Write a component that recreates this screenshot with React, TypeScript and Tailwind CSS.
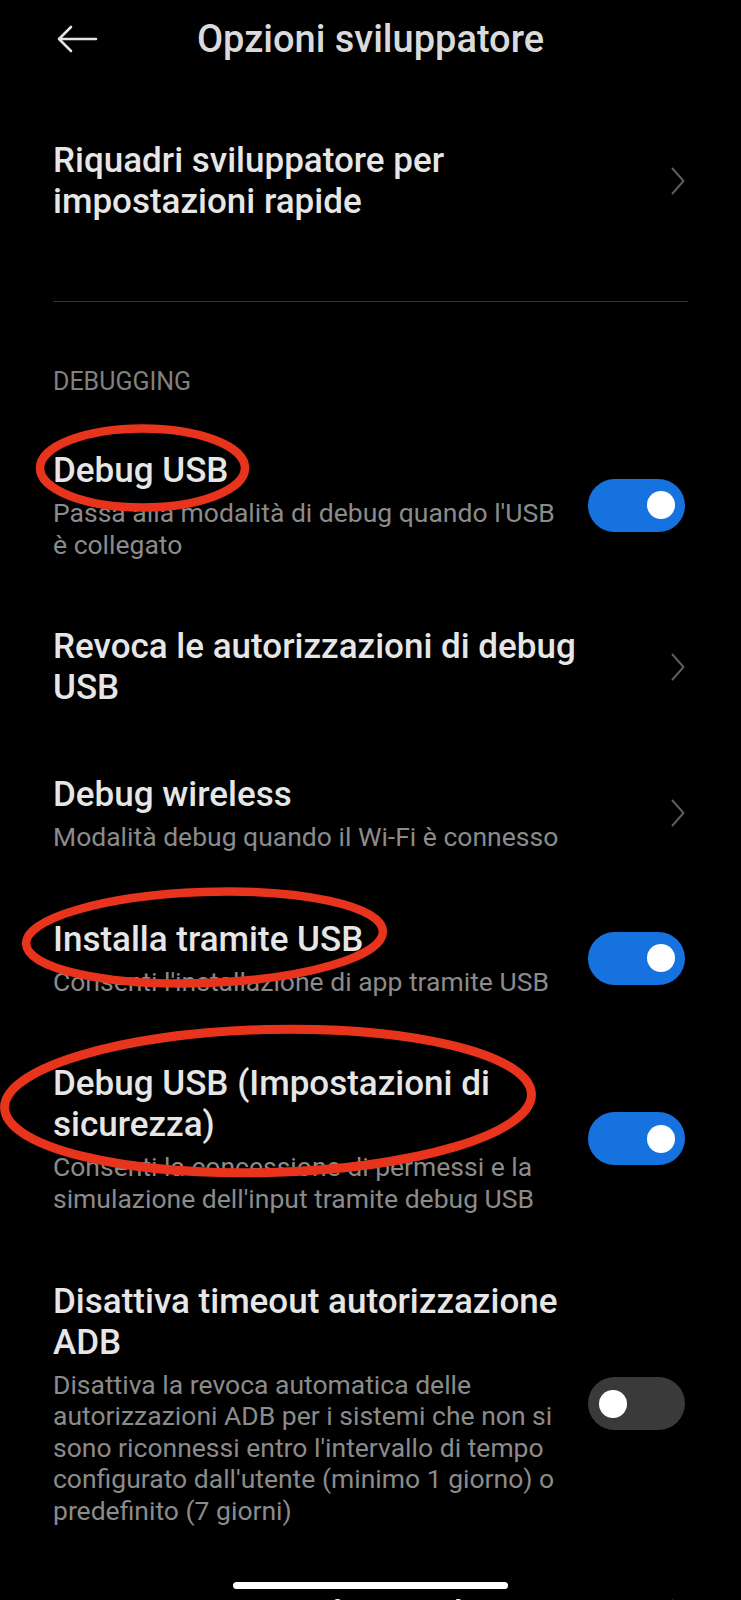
import React from "react";

type Row = {
  title: string;
  subtitle?: string;
  kind: "toggle" | "chevron";
  on?: boolean;
};

const rows: Row[] = [
  {
    title: "Debug USB",
    subtitle: "Passa alla modalità di debug quando l'USB è collegato",
    kind: "toggle",
    on: true,
  },
  { title: "Revoca le autorizzazioni di debug USB", kind: "chevron" },
  {
    title: "Debug wireless",
    subtitle: "Modalità debug quando il Wi-Fi è connesso",
    kind: "chevron",
  },
  {
    title: "Installa tramite USB",
    subtitle: "Consenti l'installazione di app tramite USB",
    kind: "toggle",
    on: true,
  },
  {
    title: "Debug USB (Impostazioni di sicurezza)",
    subtitle: "Consenti la concessione di permessi e la simulazione dell'input tramite debug USB",
    kind: "toggle",
    on: true,
  },
  {
    title: "Disattiva timeout autorizzazione ADB",
    subtitle:
      "Disattiva la revoca automatica delle autorizzazioni ADB per i sistemi che non si sono riconnessi entro l'intervallo di tempo configurato dall'utente (minimo 1 giorno) o predefinito (7 giorni)",
    kind: "toggle",
    on: false,
  },
  { title: "Scorciatoia segnalazione bug", kind: "chevron" },
];

function Chevron() {
  return (
    <svg width="14" height="28" viewBox="0 0 14 28" fill="none">
      <polyline points="1.5,1.5 12.5,14 1.5,26.5" stroke="#5c5c5c" strokeWidth="2" strokeLinecap="round" strokeLinejoin="round" />
    </svg>
  );
}

function Toggle({ on }: { on?: boolean }) {
  return (
    <div
      className={
        on
          ? "w-[97px] h-[53px] rounded-full bg-[#1672de] flex items-center justify-end pr-[10px] shrink-0"
          : "w-[97px] h-[53px] rounded-full bg-[#3a3a3a] flex items-center justify-start pl-[11px] shrink-0"
      }
    >
      <div className="w-[28px] h-[28px] rounded-full bg-white" />
    </div>
  );
}

function SettingRow({ row }: { row: Row }) {
  const isToggle = row.kind === "toggle";
  return (
    <div className="flex items-center pl-[53px] pr-[56px] py-[33px]">
      <div className={isToggle ? "flex-1 min-w-0 pr-[20px]" : "flex-1 min-w-0 pr-[51px]"}>
        <div className="text-[35px] leading-[41px] font-medium text-[#e6e6e6]">{row.title}</div>
        {row.subtitle && (
          <div className="mt-[6px] text-[26.5px] leading-[31.6px] text-[#8b8b8b]">{row.subtitle}</div>
        )}
      </div>
      {isToggle ? <Toggle on={row.on} /> : <Chevron />}
    </div>
  );
}

export default function App() {
  return (
    <div className="relative w-[741px] h-[1600px] overflow-hidden bg-black font-['Roboto','Noto_Sans',sans-serif]">
      {/* header */}
      <div className="h-[78px] grid grid-cols-[1fr_auto_1fr] items-center px-[57px]">
        <svg width="41" height="28" viewBox="0 0 41 28" fill="none">
          <path d="M2 14 H39 M14 2 L2 14 L14 26" stroke="#e3e3e3" strokeWidth="2.6" strokeLinecap="round" strokeLinejoin="round" />
        </svg>
        <div className="text-[38px] leading-[44px] font-medium text-[#dadada]">Opzioni sviluppatore</div>
        <div />
      </div>

      <div className="mt-[29px] flex items-center pl-[53px] pr-[56px] py-[33px]">
        <div className="flex-1 min-w-0 pr-[51px] text-[35px] leading-[41px] font-medium text-[#e6e6e6]">
          Riquadri sviluppatore per impostazioni rapide
        </div>
        <Chevron />
      </div>

      <div className="mt-[46px] mx-[53px] h-px bg-[#333333]" />

      <div className="mt-[65px] px-[53px] text-[25px] leading-[30px] text-[#808080]">DEBUGGING</div>

      <div className="mt-[20px]">
        {rows.map((row) => (
          <SettingRow key={row.title} row={row} />
        ))}
      </div>

      {/* red annotation marks */}
      <svg className="absolute inset-0 pointer-events-none" width="741" height="1600" viewBox="0 0 741 1600" fill="none">
        <ellipse cx="142.5" cy="468" rx="102.5" ry="39.5" stroke="#e8341c" strokeWidth="8.5" />
        <ellipse cx="204.5" cy="937.5" rx="178.5" ry="45.5" stroke="#e8341c" strokeWidth="8.5" transform="rotate(-2 204.5 937.5)" />
        <ellipse cx="268" cy="1101" rx="263.5" ry="71.5" stroke="#e8341c" strokeWidth="9" transform="rotate(-1.5 268 1101)" />
      </svg>

      {/* gesture bar */}
      <div className="absolute left-[233px] top-[1582px] w-[275px] h-[7px] rounded-full bg-white" />
    </div>
  );
}
